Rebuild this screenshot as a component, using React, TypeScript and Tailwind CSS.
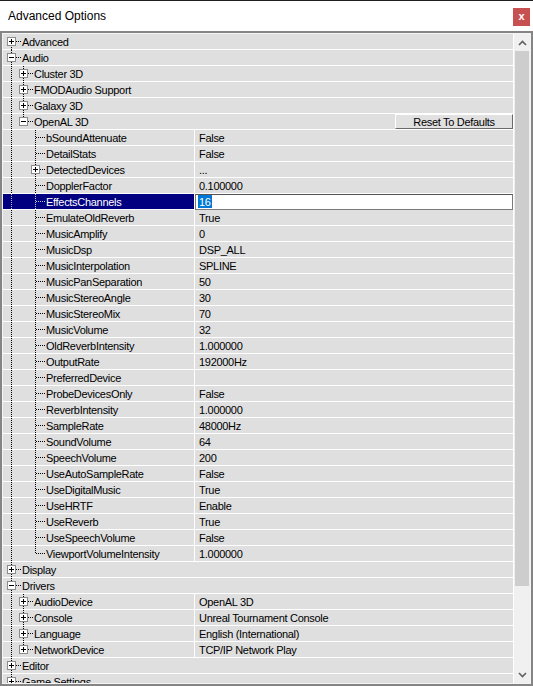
import React from "react";

type Prop = {
  label: string;
  value?: string;
  expandable?: boolean;
  open?: boolean;
  selected?: boolean;
  reset?: boolean;
  kids?: Prop[];
};

type Row = {
  node: Prop;
  level: number;
  rails: boolean[];
  first: boolean;
  last: boolean;
};

const openAL: [string, string][] = [
  ["bSoundAttenuate", "False"],
  ["DetailStats", "False"],
  ["DetectedDevices", "..."],
  ["DopplerFactor", "0.100000"],
  ["EffectsChannels", "16"],
  ["EmulateOldReverb", "True"],
  ["MusicAmplify", "0"],
  ["MusicDsp", "DSP_ALL"],
  ["MusicInterpolation", "SPLINE"],
  ["MusicPanSeparation", "50"],
  ["MusicStereoAngle", "30"],
  ["MusicStereoMix", "70"],
  ["MusicVolume", "32"],
  ["OldReverbIntensity", "1.000000"],
  ["OutputRate", "192000Hz"],
  ["PreferredDevice", ""],
  ["ProbeDevicesOnly", "False"],
  ["ReverbIntensity", "1.000000"],
  ["SampleRate", "48000Hz"],
  ["SoundVolume", "64"],
  ["SpeechVolume", "200"],
  ["UseAutoSampleRate", "False"],
  ["UseDigitalMusic", "True"],
  ["UseHRTF", "Enable"],
  ["UseReverb", "True"],
  ["UseSpeechVolume", "False"],
  ["ViewportVolumeIntensity", "1.000000"],
];

const tree: Prop[] = [
  { label: "Advanced", expandable: true },
  {
    label: "Audio",
    expandable: true,
    open: true,
    kids: [
      { label: "Cluster 3D", expandable: true },
      { label: "FMODAudio Support", expandable: true },
      { label: "Galaxy 3D", expandable: true },
      {
        label: "OpenAL 3D",
        expandable: true,
        open: true,
        reset: true,
        kids: openAL.map(([label, value]) => ({
          label,
          value,
          expandable: label === "DetectedDevices",
          selected: label === "EffectsChannels",
        })),
      },
    ],
  },
  { label: "Display", expandable: true },
  {
    label: "Drivers",
    expandable: true,
    open: true,
    kids: [
      { label: "AudioDevice", value: "OpenAL 3D", expandable: true },
      { label: "Console", value: "Unreal Tournament Console", expandable: true },
      { label: "Language", value: "English (International)", expandable: true },
      { label: "NetworkDevice", value: "TCP/IP Network Play", expandable: true },
    ],
  },
  { label: "Editor", expandable: true },
  { label: "Game Settings", expandable: true },
];

// root list keeps going below the fold, so its rail never ends
function flatten(nodes: Prop[], level: number, rails: boolean[], out: Row[]) {
  nodes.forEach((node, i) => {
    const last = level > 0 && i === nodes.length - 1;
    out.push({ node, level, rails, first: level === 0 && i === 0, last });
    if (node.open && node.kids) flatten(node.kids, level + 1, [...rails, !last], out);
  });
  return out;
}

const rows = flatten(tree, 0, [], []);

const dotsV = "bg-[repeating-linear-gradient(to_bottom,#000_0_1px,transparent_1px_2px)]";
const dotsVSel = "bg-[repeating-linear-gradient(to_bottom,#c8c8c8_0_1px,transparent_1px_2px)]";
const dotsH = "bg-[repeating-linear-gradient(to_right,#000_0_1px,transparent_1px_2px)]";
const dotsHSel = "bg-[repeating-linear-gradient(to_right,#c8c8c8_0_1px,transparent_1px_2px)]";

function ExpandBox({ open }: { open?: boolean }) {
  return (
    <span className="absolute left-[2px] top-[3px] size-[9px] border border-[#8c8c8c] bg-white">
      <span className="absolute left-[1px] top-[3px] h-px w-[5px] bg-black" />
      {!open && <span className="absolute left-[3px] top-[1px] h-[5px] w-px bg-black" />}
    </span>
  );
}

function TreeRow({ row }: { row: Row }) {
  const { node, level, rails, first, last } = row;
  const sel = !!node.selected;
  const hasValue = node.value !== undefined;
  const v = sel ? dotsVSel : dotsV;
  const h = sel ? dotsHSel : dotsH;
  const stem = last ? "top-0 h-[8px]" : first ? "top-[7px] -bottom-px" : "top-0 -bottom-px";

  return (
    <div className="flex h-4 shrink-0 border-b border-r border-white">
      <div
        className={`flex h-full items-center pl-[2px] ${
          hasValue ? "w-[192px] shrink-0 border-r border-white" : "flex-1"
        } ${sel ? "bg-[#000080] text-white" : "text-black"}`}
      >
        {rails.map((on, i) => (
          <span key={i} className="relative h-full w-3 shrink-0">
            {on && <span className={`absolute -bottom-px left-[6px] top-0 w-px ${v}`} />}
          </span>
        ))}
        <span className="relative h-full w-4 shrink-0">
          <span className={`absolute left-[6px] w-px ${stem} ${v}`} />
          <span
            className={`absolute right-0 top-[7px] h-px ${node.expandable ? "left-[11px]" : "left-[7px]"} ${h}`}
          />
          {node.expandable && <ExpandBox open={node.open} />}
        </span>
        <span className="ml-px whitespace-nowrap pt-[2px]">{node.label}</span>
        {node.reset && (
          <button className="ml-auto flex h-[15px] w-[118px] shrink-0 items-center justify-center border-b border-l border-r border-t border-b-[#6b6b6b] border-l-white border-r-[#6b6b6b] border-t-white bg-[#e1e1e1] pt-[2px] text-black">
            Reset To Defaults
          </button>
        )}
      </div>
      {hasValue && (
        <div className="flex h-full flex-1 items-center">
          {sel ? (
            <div className="flex h-[16px] w-full items-center border border-[#7a7a7a] border-t-[#555] bg-white pl-[2px]">
              <span className="bg-[#0078d7] px-px pt-px leading-[12px] text-white">{node.value}</span>
            </div>
          ) : (
            <span className="whitespace-nowrap pl-[4px] pt-[2px] text-black">{node.value}</span>
          )}
        </div>
      )}
    </div>
  );
}

function Chevron({ up }: { up?: boolean }) {
  return (
    <svg width="9" height="6" viewBox="0 0 9 6">
      <polyline
        points={up ? "1,5 4.5,1.5 8,5" : "1,1 4.5,4.5 8,1"}
        fill="none"
        stroke="#606060"
        strokeWidth="1.6"
      />
    </svg>
  );
}

function ScrollBar() {
  return (
    <div className="flex w-4 shrink-0 flex-col bg-[#f0f0f0]">
      <div className="flex h-[17px] items-center justify-center">
        <Chevron up />
      </div>
      <div className="flex-1 px-px">
        <div className="h-[535px] bg-[#cdcdcd]" />
      </div>
      <div className="flex h-[17px] items-center justify-center">
        <Chevron />
      </div>
    </div>
  );
}

export default function App() {
  return (
    <div className="flex h-[686px] w-[533px] flex-col overflow-hidden bg-white font-['Liberation_Sans',Arial,sans-serif]">
      <div className="h-px bg-[#1f1f1f]" />
      {/* title bar */}
      <div className="flex h-[30px] shrink-0 items-start justify-between bg-white">
        <span className="ml-2 mt-[8px] text-[12px] leading-[15px] text-black">Advanced Options</span>
        <div className="mr-[3px] mt-[7px] flex h-[18px] w-[17px] items-center justify-center bg-[#c75050] pb-px text-[11px] font-bold leading-none text-white">
          x
        </div>
      </div>

      {/* property tree */}
      <div className="flex min-h-0 flex-1 border-2 border-[#858585]">
        <div className="flex min-h-0 flex-1 border border-[#f4f4f4]">
          <div className="flex min-w-0 flex-1 flex-col overflow-hidden bg-[#dfdfdf] text-[11px] leading-none tracking-[-0.3px]">
            {rows.map((row, i) => (
              <TreeRow key={i} row={row} />
            ))}
          </div>
          <ScrollBar />
        </div>
      </div>
    </div>
  );
}
